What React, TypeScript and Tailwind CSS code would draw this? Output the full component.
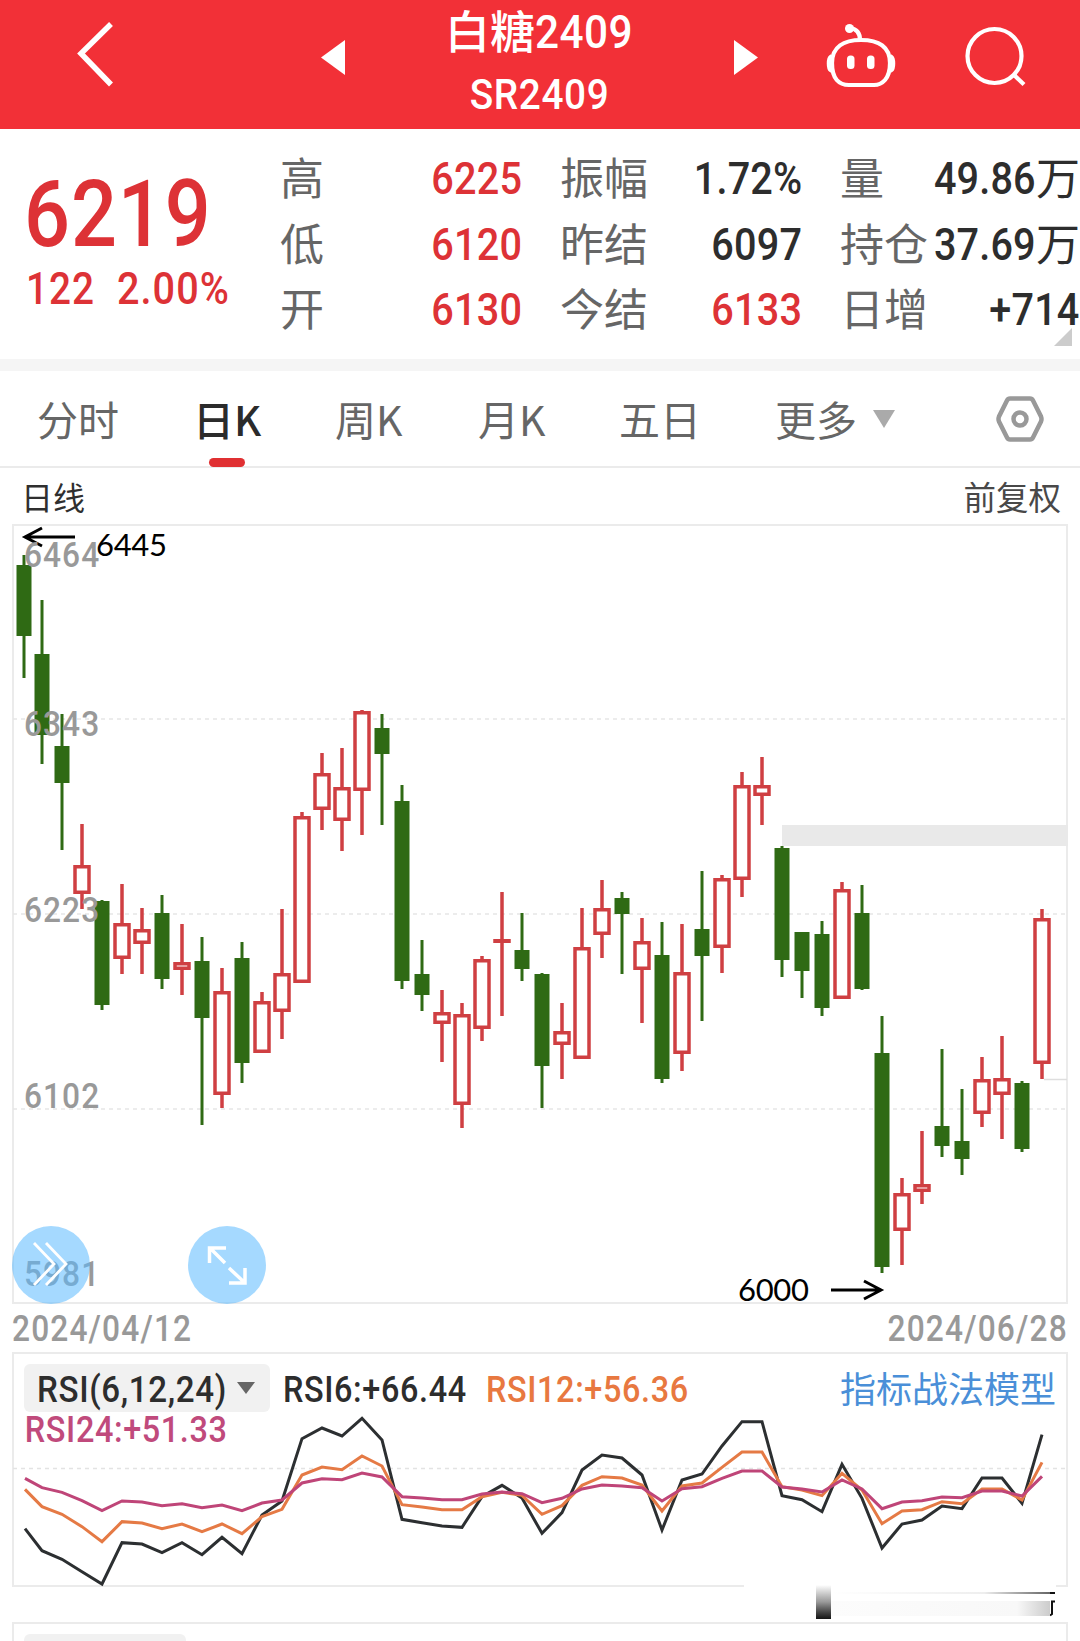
import { clsx } from "clsx";

type Candle = ["r" | "g", number, number, number, number];

// colour, high, body top, body bottom, low (chart y coordinates)
const candles: Candle[] = [
  ["g", 555, 565, 636, 678],
  ["g", 600, 654, 735, 764],
  ["g", 714, 746, 783, 850],
  ["r", 824, 865, 894, 909],
  ["g", 900, 901, 1005, 1010],
  ["r", 884, 923, 959, 974],
  ["r", 908, 929, 944, 974],
  ["g", 895, 913, 979, 989],
  ["r", 924, 962, 970, 995],
  ["g", 937, 961, 1018, 1125],
  ["r", 968, 991, 1095, 1108],
  ["g", 942, 958, 1063, 1083],
  ["r", 992, 1001, 1053, 1053],
  ["r", 909, 973, 1012, 1039],
  ["r", 812, 816, 983, 983],
  ["r", 753, 773, 810, 830],
  ["r", 748, 787, 821, 851],
  ["r", 710, 711, 791, 835],
  ["g", 714, 728, 754, 825],
  ["g", 785, 801, 981, 989],
  ["g", 940, 974, 995, 1011],
  ["r", 990, 1012, 1024, 1062],
  ["r", 1003, 1014, 1105, 1128],
  ["r", 956, 959, 1029, 1041],
  ["r", 892, 939, 943, 1016],
  ["g", 913, 950, 969, 981],
  ["g", 973, 974, 1066, 1108],
  ["r", 1003, 1031, 1045, 1079],
  ["r", 908, 947, 1059, 1059],
  ["r", 880, 908, 935, 958],
  ["g", 892, 898, 914, 974],
  ["r", 918, 941, 970, 1023],
  ["g", 922, 955, 1079, 1083],
  ["r", 924, 972, 1054, 1071],
  ["g", 871, 929, 956, 1021],
  ["r", 875, 878, 948, 973],
  ["r", 772, 785, 880, 897],
  ["r", 757, 785, 796, 825],
  ["g", 846, 848, 960, 977],
  ["g", 932, 932, 971, 998],
  ["g", 921, 934, 1008, 1016],
  ["r", 882, 889, 999, 999],
  ["g", 885, 913, 989, 990],
  ["g", 1016, 1053, 1267, 1273],
  ["r", 1178, 1193, 1231, 1265],
  ["r", 1131, 1184, 1192, 1204],
  ["g", 1049, 1126, 1146, 1157],
  ["g", 1089, 1141, 1159, 1175],
  ["r", 1057, 1079, 1114, 1127],
  ["r", 1036, 1078, 1095, 1139],
  ["g", 1081, 1083, 1149, 1152],
  ["r", 909, 918, 1064, 1079],
];

// thirds of a pixel below the top of the RSI area
const rsi6 = [
  566, 632, 658, 695, 732, 608, 612, 638, 608, 644, 592, 641, 525, 483, 296, 264, 288, 235, 300,
  538, 548, 558, 562, 470, 436, 474, 580, 518, 390, 345, 354, 405, 570, 420, 402, 318, 245, 245,
  467, 479, 515, 373, 475, 624, 552, 540, 498, 506, 414, 414, 490, 284,
];
const rsi12 = [
  448, 500, 523, 560, 605, 545, 549, 566, 552, 575, 552, 581, 530, 508, 405, 381, 389, 348, 378,
  494, 501, 509, 509, 470, 457, 466, 523, 497, 436, 410, 414, 435, 513, 438, 429, 382, 336, 336,
  440, 450, 467, 400, 450, 551, 513, 509, 485, 491, 447, 447, 480, 367,
];
const rsi24 = [
  415, 443, 457, 482, 512, 483, 486, 497, 491, 503, 495, 512, 489, 480, 429, 416, 419, 399, 411,
  470, 474, 479, 479, 462, 456, 461, 488, 475, 447, 435, 438, 443, 483, 446, 440, 415, 393, 393,
  441, 447, 456, 420, 447, 506, 486, 482, 471, 473, 453, 453, 468, 409,
];

const axisLabels = [
  { text: "6464", y: 567 },
  { text: "6343", y: 736 },
  { text: "6223", y: 922 },
  { text: "6102", y: 1108 },
  { text: "5981", y: 1286 },
];

const quotes = [
  [
    { label: "高", value: "6225", up: true },
    { label: "低", value: "6120", up: true },
    { label: "开", value: "6130", up: true },
  ],
  [
    { label: "振幅", value: "1.72%" },
    { label: "昨结", value: "6097" },
    { label: "今结", value: "6133", up: true },
  ],
  [
    { label: "量", value: "49.86", unit: "万" },
    { label: "持仓", value: "37.69", unit: "万" },
    { label: "日增", value: "+714" },
  ],
];

const tabs = [
  { label: "分时", width: "w-[158px]" },
  { label: "日K", width: "w-[140px]", active: true },
  { label: "周K", width: "w-[143px]" },
  { label: "月K", width: "w-[141px]" },
  { label: "五日", width: "w-[156px]" },
  { label: "更多", width: "w-[98px]" },
];

const candleX = (i: number) => (i === 0 ? 24 : 22 + i * 20);

const Header = () => (
  <header className="flex h-[129px] bg-[#f23037] text-white">
    <div className="w-[76px]" />
    <svg className="mt-[20px] h-[70px] w-[40px]" viewBox="0 0 40 70" fill="none">
      <path d="M35 4 5 33.500 35 64.500" stroke="currentColor" strokeWidth="5.500" />
    </svg>
    <svg className="mt-[40px] ml-[205px] h-[35px] w-[24px]" viewBox="0 0 24 35" fill="currentColor">
      <path d="M0 17.500 24 0V35Z" />
    </svg>
    <div className="flex w-[389px] flex-col items-center">
      <div className="mt-[-2px] flex h-[62px] items-center text-[45px] leading-none font-medium">
        白糖
        <span className="mt-[4px] -mr-[10px] origin-left scale-x-90 font-[Roboto] text-[47px] tracking-[0.5px]">2409</span>
      </div>
      <div className="mt-[12px] scale-x-90 font-[Roboto] text-[43px] leading-[44px] font-medium tracking-[0.7px]">SR2409</div>
    </div>
    <svg className="mt-[40px] h-[35px] w-[24px]" viewBox="0 0 24 35" fill="currentColor">
      <path d="M24 17.500 0 0V35Z" />
    </svg>
    <svg className="mt-[21px] ml-[66px] h-[70px] w-[76px]" viewBox="0 0 76 70" fill="none" stroke="currentColor" strokeWidth="4.200">
      <path d="M37 19C55 19 66 26 66 42C66 58 58 64 50 64H25C15 64 8 58 8 42C8 26 20 19 37 19Z" />
      <path d="M36 19C36 12 33 8 26 7" />
      <circle cx="25.500" cy="7.500" r="4.500" fill="currentColor" stroke="none" />
      <path d="M6 35C3 37 3 48 6 50Z" fill="currentColor" strokeWidth="2" />
      <path d="M68 35C71 37 71 48 68 50Z" fill="currentColor" strokeWidth="2" />
      <rect x="23" y="34.500" width="7.500" height="13.500" rx="3.500" fill="currentColor" stroke="none" />
      <rect x="43" y="34.500" width="7.500" height="13.500" rx="3.500" fill="currentColor" stroke="none" />
    </svg>
    <svg className="mt-[23px] ml-[63px] h-[68px] w-[66px]" viewBox="0 0 66 68" fill="none" stroke="currentColor" strokeWidth="4.200">
      <circle cx="31.500" cy="33" r="27" />
      <path d="M51 52 61 61.500" />
    </svg>
  </header>
);

const QuoteBoard = () => (
  <section className="relative flex h-[230px] text-[#dd3236]">
    <div className="w-[280px] shrink-0 pt-[46px] pl-[24px] font-[Roboto] font-medium">
      <div className="origin-left scale-x-88 text-[92px] leading-[80px] tracking-[1px]">6219</div>
      <div className="mt-[11px] ml-[2px] flex text-[45px] leading-[46px] tracking-[1.2px]">
        <span className="w-[91px] origin-left scale-x-86">122</span>
        <span className="origin-left scale-x-88">2.00%</span>
      </div>
    </div>
    <div className="flex shrink-0 gap-[38px] pt-[16px]">
      {quotes.map((column, index) => (
        <div key={index} className="w-[242px] last:w-[240px]">
          {column.map(({ label, value, up, unit }) => (
            <div key={label} className="flex h-[65.500px] items-center justify-between text-[44px] leading-[60px] whitespace-nowrap">
              <span className="-mt-[3px] text-[#666]">{label}</span>
              <span className={clsx("-ml-6 flex items-center", !up && "text-[#2d2d2d]")}>
                <span className="mt-[3px] origin-right scale-x-88 font-[Roboto] text-[45px] font-medium tracking-[0.2px]">{value}</span>
                {unit && <span className="-mt-[3px]">{unit}</span>}
              </span>
            </div>
          ))}
        </div>
      ))}
    </div>
    <svg className="absolute top-[199px] left-[1054px] h-[18px] w-[18px]" viewBox="0 0 18 18" fill="#ccc">
      <path d="M18 0V18H0Z" />
    </svg>
  </section>
);

const PeriodTabs = () => (
  <nav className="flex h-[97px] items-center border-b-2 border-[#ebebeb] pl-[37px] text-[41px] text-[#666]">
    {tabs.map(({ label, width, active }) => (
      <div key={label} className={clsx("relative flex h-full items-center whitespace-nowrap", width, active && "text-[#2b2b2b]")}>
        <span className={clsx(active && "-ml-[2px] font-medium")}>{label}</span>
        {active && <span className="absolute -bottom-px left-[14px] h-[9px] w-[36px] rounded-full bg-[#e03032]" />}
      </div>
    ))}
    <svg className="h-[18px] w-[22px]" viewBox="0 0 22 18" fill="#aaa">
      <path d="M0 0H22L11 18Z" />
    </svg>
    <svg className="ml-[100px] h-[48px] w-[50px]" viewBox="0 0 50 48" fill="none" stroke="#999" strokeWidth="4.500">
      <path d="M15 3.500H35Q37 3.500 38 5.500L46 21.500Q47 24 46 26.500L38 42.500Q37 44.500 35 44.500H15Q13 44.500 12 42.500L4 26.500Q3 24 4 21.500L12 5.500Q13 3.500 15 3.500Z" />
      <circle cx="25" cy="24" r="6.500" />
    </svg>
  </nav>
);

const CandleChart = () => (
  <div className="relative mx-[12px]">
    <svg className="block h-[780px] w-[1056px] overflow-visible" viewBox="12 524 1056 780">
      <rect x="13" y="525" width="1054" height="778" fill="none" stroke="#ebebeb" strokeWidth="2" />
      {[719, 914, 1109].map((y) => (
        <path key={y} d={`M13 ${y}H1067`} stroke="#e6e6e6" strokeWidth="1.500" strokeDasharray="4 4" />
      ))}
      <rect x="782" y="825" width="286" height="21" fill="#e9e9e9" />
      <path d="M1044 1079.500H1067" stroke="#dedede" strokeWidth="1.500" />
      {candles.map(([kind, high, top, bottom, low], i) => {
        const x = candleX(i);
        return kind === "g" ? (
          <g key={i} fill="#2f6a14">
            <rect x={x - 1.5} y={high} width="3" height={low - high} />
            <rect x={x - 7.5} y={top} width="15" height={bottom - top} />
          </g>
        ) : (
          <g key={i} stroke="#cf3f42" strokeWidth="3.500" fill="#fff">
            <path d={`M${x} ${high}V${top + 1}M${x} ${bottom - 1}V${low}`} />
            <rect x={x - 7} y={top + 1.75} width="14" height={Math.max(bottom - top - 3.5, 0.5)} />
          </g>
        );
      })}
      <g fill="none" stroke="#000" strokeWidth="3">
        <path d="M75 537H25M42 528 25 537 42 546" />
        <path d="M831 1290H881M864 1281 881 1290 864 1299" />
      </g>
      <g fontFamily="Lato" fontSize="31" fill="#000">
        <text x="96" y="556" textLength="71">6445</text>
        <text x="738" y="1301" textLength="71">6000</text>
      </g>
      <g className="font-[Roboto] font-medium" fontSize="36" letterSpacing="1.2" fill="#999">
        {axisLabels.map(({ text, y }) => (
          <text key={text} transform={`translate(24 ${y}) scale(0.88 1)`}>
            {text}
          </text>
        ))}
      </g>
    </svg>
    <button className="absolute bottom-0 left-0 h-[78px] w-[78px] rounded-full bg-[#5bbaff]/55">
      <svg viewBox="0 0 78 78" fill="none" stroke="#fff" strokeWidth="2.800">
        <path d="M22 17 42 38 22 59M34 17 54 38 34 59" />
      </svg>
    </button>
    <button className="absolute bottom-0 left-[176px] h-[78px] w-[78px] rounded-full bg-[#5bbaff]/55">
      <svg viewBox="0 0 78 78" fill="none" stroke="#fff" strokeWidth="3.500">
        <path d="M21.500 37V22H38M22 22 37 37" />
        <path d="M57 42V57H41M57 57 41 42" />
      </svg>
    </button>
  </div>
);

const points = (series: number[]) => series.map((v, i) => `${i === 0 ? 25 : 22 + i * 20},${1340 + v / 3}`).join(" ");

const RsiPanel = () => (
  <div className="relative mx-[12px] h-[235px] border-2 border-[#ebebeb]">
    <svg className="absolute -top-[2px] -left-[2px] h-[235px] w-[1056px]" viewBox="12 1352 1056 235" fill="none" strokeWidth="3">
      <path d="M13 1468.500H1067" stroke="#e3e3e3" strokeWidth="1.500" strokeDasharray="4 4" />
      <polyline points={points(rsi6)} stroke="#2c2f31" />
      <polyline points={points(rsi12)} stroke="#e57a45" />
      <polyline points={points(rsi24)} stroke="#bf4578" />
    </svg>
    <div className="relative flex h-[58px] items-end pl-[10px] font-[Roboto] text-[36px] font-medium whitespace-nowrap text-[#2d2d2d]">
      <div className="flex h-[48px] w-[246px] items-center rounded-md bg-[#f1f1f1] pl-[13px]">
        <span className="mt-[4px] w-[200px] origin-left scale-x-92 tracking-[0.7px]">RSI(6,12,24)</span>
        <svg className="mb-[1px] h-[12px] w-[18px]" viewBox="0 0 18 12" fill="#666">
          <path d="M0 0H18L9 12Z" />
        </svg>
      </div>
      <span className="ml-[13px] w-[203px] origin-left translate-y-[2px] scale-x-90 leading-[48px] tracking-[0.7px]">RSI6:+66.44</span>
      <span className="w-[354px] origin-left translate-y-[2px] scale-x-90 leading-[48px] tracking-[0.7px] text-[#e87840]">RSI12:+56.36</span>
      <span className="font-['Noto_Sans_CJK_SC'] leading-[50px] font-normal text-[#4a8fd8]">指标战法模型</span>
    </div>
    <div className="-mt-[1px] origin-left scale-x-90 pl-[12px] font-[Roboto] text-[36px] leading-[38px] font-medium tracking-[0.7px] text-[#c04a7c]">
      RSI24:+51.33
    </div>
  </div>
);

const SmudgeStrip = () => (
  <div className="relative -mt-[2px] flex h-[38px] pl-[744px]">
    <div className="h-[36px] w-[72px] bg-white" />
    <div className="h-[34px] w-[15px] bg-linear-to-b from-white via-[#999] to-[#151515]" />
    <div className="flex h-[36px] w-[219px] flex-col bg-white pt-[7px]">
      <div className="h-[2px] bg-linear-to-r from-white via-[#eee] via-70% to-[#666]" />
      <div className="mt-[7px] h-[15px] bg-linear-to-r from-[#fcfcfc] via-[#f8f8f8] via-85% to-[#ccc]" />
    </div>
    <svg className="h-[36px] w-[6px] bg-white" viewBox="0 0 6 36" fill="none" stroke="#111" strokeWidth="2">
      <path d="M0 8H5M5 16.500H2V29L0 30.500" />
    </svg>
  </div>
);

export default function App() {
  return (
    <div className="h-[1641px] w-[1080px] overflow-hidden bg-white font-['Noto_Sans_CJK_SC',sans-serif]">
      <Header />
      <QuoteBoard />
      <div className="h-[12px] bg-[#f5f5f5]" />
      <PeriodTabs />
      <div className="flex h-[56px] items-center justify-between pr-[19px] pl-[21px] text-[32px] text-[#2f2f2f]">
        <span>日线</span>
        <span className="text-[32.500px] text-[#484848]">前复权</span>
      </div>
      <CandleChart />
      <div className="flex h-[48px] items-center justify-between px-[12px] pt-[2px] font-[Roboto] text-[36px] font-medium tracking-[1.3px] text-[#999]">
        <span className="origin-left scale-x-88">2024/04/12</span>
        <span className="origin-right scale-x-88">2024/06/28</span>
      </div>
      <RsiPanel />
      <SmudgeStrip />
      <div className="mx-[12px] -mt-px h-[40px] border-2 border-[#ebebeb] pt-[10px] pl-[10px]">
        <div className="h-[40px] w-[162px] rounded-md bg-[#f1f1f1]" />
      </div>
    </div>
  );
}
